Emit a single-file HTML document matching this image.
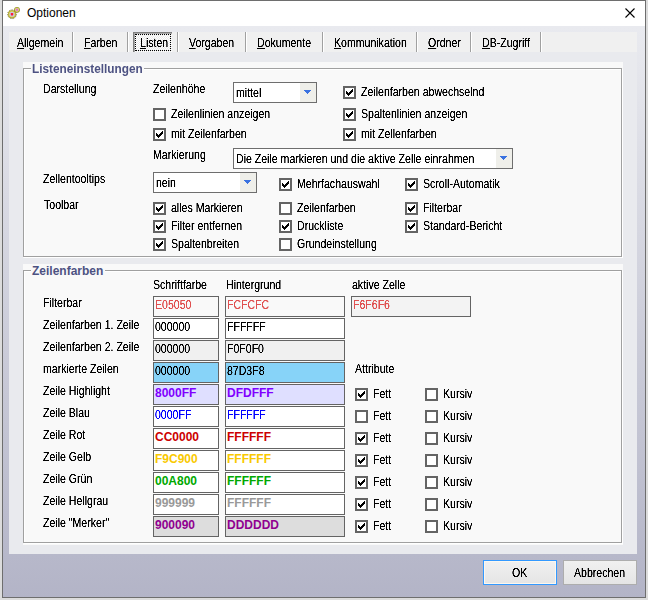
<!DOCTYPE html>
<html><head><meta charset="utf-8"><style>
html,body{margin:0;padding:0;}
body{width:648px;height:600px;position:relative;overflow:hidden;-webkit-font-smoothing:antialiased;background:#dcdcdc;font-family:"Liberation Sans", sans-serif;font-size:11px;color:#000;}
.a{position:absolute;}
.t,.ct,.tb span{filter:url(#al);}
.gt,.tb.bb span{filter:none;}
.t{position:absolute;white-space:nowrap;line-height:14px;font-size:12px;transform:scaleX(0.88);transform-origin:0 0;}
.b{font-weight:bold;transform:none;}
.cb{position:absolute;width:9px;height:9px;border:2px solid #646464;background:#fff;}
.combo{position:absolute;border:1px solid #6e6e6e;background:#fff;}
.ct{position:absolute;left:2px;line-height:14px;font-size:12px;white-space:nowrap;transform:scaleX(0.88);transform-origin:0 0;}
.cbtn{position:absolute;right:0;top:0;width:16px;bottom:0;background:#efefea;}
.tb{position:absolute;box-sizing:border-box;border:1px solid #646464;}
.tb span{position:absolute;left:1px;top:1px;line-height:14px;font-size:12px;white-space:nowrap;transform:scaleX(0.88);transform-origin:0 0;}
.tb.bb span{font-weight:bold;transform:none;}
u{text-decoration:underline;text-decoration-thickness:1px;text-underline-offset:1px;}
.gt{position:absolute;white-space:nowrap;line-height:14px;font-size:12px;font-weight:bold;color:#4d5282;}
</style></head><body><svg width="0" height="0" style="position:absolute"><filter id="al" x="-20%" y="-50%" width="140%" height="200%" color-interpolation-filters="sRGB"><feComponentTransfer><feFuncA type="linear" slope="2.2" intercept="-0.35"/></feComponentTransfer></filter></svg>
<div class="a" style="left:2px;top:0px;width:644px;height:598px;box-sizing:border-box;border:1px solid #6e6e6e;background:linear-gradient(#e9eaef 0px,#e9eaef 26px,#b3b4c7 597px);"></div>
<div class="a" style="left:3px;top:1px;width:642px;height:25px;background:#fff"></div>
<svg class="a" style="left:5px;top:4px" width="16" height="16" viewBox="0 0 16 16">
<circle cx="7.6" cy="10.8" r="4.6" fill="#e8e8e8" opacity="0.6"/>
<circle cx="7" cy="10.2" r="4.3" fill="none" stroke="#6e6620" stroke-width="1" stroke-dasharray="1.2 1.2"/>
<circle cx="7" cy="10.2" r="4.0" fill="#a69c2c"/>
<circle cx="7" cy="10.2" r="3.3" fill="#dcd44a"/>
<circle cx="7" cy="10.2" r="2.5" fill="#c6c6e6"/>
<rect x="5.8" y="9" width="2.4" height="2.4" rx="0.6" fill="#ff1a35"/>
<circle cx="12" cy="5.8" r="2.9" fill="#8c8426"/>
<circle cx="12" cy="5.8" r="2.3" fill="#dcd44a"/>
<circle cx="12" cy="5.8" r="1.6" fill="#d2b4dc"/>
<rect x="11" y="4.8" width="2" height="2" rx="0.5" fill="#e070c0"/>
</svg>
<div class="a" style="left:27px;top:5px;font-size:12px;line-height:16px;white-space:nowrap;color:#000">Optionen</div>
<svg class="a" style="left:624px;top:7px" width="12" height="12" viewBox="0 0 12 12"><path d="M1.5 1.5L10.5 10.5M10.5 1.5L1.5 10.5" stroke="#000" stroke-width="1.1"/></svg>
<div class="a" style="left:9px;top:52px;width:628px;height:502px;background:#e9eaee"></div>
<div class="a" style="left:9px;top:32px;width:628px;height:20px;background:#f0f0f0"></div>
<div class="a" style="left:72px;top:32px;width:1px;height:20px;background:#a0a0a0"></div>
<div class="a" style="left:73px;top:32px;width:1px;height:20px;background:#fff"></div>
<div class="a" style="left:127px;top:32px;width:1px;height:20px;background:#a0a0a0"></div>
<div class="a" style="left:128px;top:32px;width:1px;height:20px;background:#fff"></div>
<div class="a" style="left:177px;top:32px;width:1px;height:20px;background:#a0a0a0"></div>
<div class="a" style="left:178px;top:32px;width:1px;height:20px;background:#fff"></div>
<div class="a" style="left:245px;top:32px;width:1px;height:20px;background:#a0a0a0"></div>
<div class="a" style="left:246px;top:32px;width:1px;height:20px;background:#fff"></div>
<div class="a" style="left:322px;top:32px;width:1px;height:20px;background:#a0a0a0"></div>
<div class="a" style="left:323px;top:32px;width:1px;height:20px;background:#fff"></div>
<div class="a" style="left:416px;top:32px;width:1px;height:20px;background:#a0a0a0"></div>
<div class="a" style="left:417px;top:32px;width:1px;height:20px;background:#fff"></div>
<div class="a" style="left:470px;top:32px;width:1px;height:20px;background:#a0a0a0"></div>
<div class="a" style="left:471px;top:32px;width:1px;height:20px;background:#fff"></div>
<div class="a" style="left:540px;top:32px;width:1px;height:20px;background:#a0a0a0"></div>
<div class="a" style="left:541px;top:32px;width:1px;height:20px;background:#fff"></div>
<div class="a" style="left:133px;top:32px;width:39px;height:20px;box-sizing:border-box;border-top:1px solid #808080;border-left:1px solid #808080;box-shadow:inset 1px 1px 0 #a8a8a8;background-color:#fff;background-image:repeating-conic-gradient(#fff 0 25%,#ebebeb 0 50%);background-size:2px 2px"></div>
<div class="a" style="left:135px;top:34px;width:36px;height:17px;box-sizing:border-box;border:1px dotted #000"></div>
<div class="t" style="left:17px;top:36px;"><u>A</u>llgemein</div>
<div class="t" style="left:84px;top:36px;"><u>F</u>arben</div>
<div class="t" style="left:140px;top:36px;"><u>L</u>isten</div>
<div class="t" style="left:189px;top:36px;"><u>V</u>orgaben</div>
<div class="t" style="left:257px;top:36px;"><u>D</u>okumente</div>
<div class="t" style="left:334px;top:36px;"><u>K</u>ommunikation</div>
<div class="t" style="left:428px;top:36px;"><u>O</u>rdner</div>
<div class="t" style="left:482px;top:36px;"><u>D</u>B-Zugriff</div>
<div class="a" style="left:23px;top:62px;width:600px;height:196px;background:#f9f9f9"></div>
<div class="a" style="left:24px;top:69px;width:599px;height:189px;border:1px solid #fff;box-sizing:border-box"></div>
<div class="a" style="left:23px;top:68px;width:599px;height:189px;border:1px solid #a0a0a0;box-sizing:border-box"></div>
<div class="a" style="left:31px;top:62px;width:113px;height:15px;background:#f9f9f9"></div>
<div class="gt" style="left:32px;top:62px;transform:scaleX(0.982);transform-origin:0 0;">Listeneinstellungen</div>
<div class="t" style="left:43px;top:82px;">Darstellung</div>
<div class="t" style="left:153px;top:82px;">Zeilenhöhe</div>
<div class="combo" style="left:233px;top:82px;width:82px;height:19px"><div class="ct" style="top:3px">mittel</div><div class="cbtn"><svg width="7" height="4" viewBox="0 0 7 4" shape-rendering="crispEdges" style="position:absolute;left:4px;top:7px"><path d="M0 0h7v1h-1v1h-1v1h-1v1h-1v-1h-1v-1h-1v-1h-1z" fill="#3a72e0"/></svg></div></div>
<div class="cb" style="left:153px;top:108px"></div>
<div class="t" style="left:171px;top:107px;">Zeilenlinien anzeigen</div>
<div class="cb" style="left:153px;top:128px"><svg width="7" height="7" viewBox="0 0 7 7" shape-rendering="crispEdges" style="position:absolute;left:1px;top:1px"><path d="M6 0h1v1h-1zM5 1h2v1h-2zM0 2h1v1h-1zM4 2h3v1h-3zM0 3h2v1h-2zM3 3h3v1h-3zM0 4h5v1h-5zM1 5h3v1h-3zM2 6h1v1h-1z" fill="#000"/></svg></div>
<div class="t" style="left:171px;top:127px;">mit Zeilenfarben</div>
<div class="cb" style="left:343px;top:86px"><svg width="7" height="7" viewBox="0 0 7 7" shape-rendering="crispEdges" style="position:absolute;left:1px;top:1px"><path d="M6 0h1v1h-1zM5 1h2v1h-2zM0 2h1v1h-1zM4 2h3v1h-3zM0 3h2v1h-2zM3 3h3v1h-3zM0 4h5v1h-5zM1 5h3v1h-3zM2 6h1v1h-1z" fill="#000"/></svg></div>
<div class="t" style="left:361px;top:85px;">Zeilenfarben abwechselnd</div>
<div class="cb" style="left:343px;top:108px"><svg width="7" height="7" viewBox="0 0 7 7" shape-rendering="crispEdges" style="position:absolute;left:1px;top:1px"><path d="M6 0h1v1h-1zM5 1h2v1h-2zM0 2h1v1h-1zM4 2h3v1h-3zM0 3h2v1h-2zM3 3h3v1h-3zM0 4h5v1h-5zM1 5h3v1h-3zM2 6h1v1h-1z" fill="#000"/></svg></div>
<div class="t" style="left:361px;top:107px;">Spaltenlinien anzeigen</div>
<div class="cb" style="left:343px;top:128px"><svg width="7" height="7" viewBox="0 0 7 7" shape-rendering="crispEdges" style="position:absolute;left:1px;top:1px"><path d="M6 0h1v1h-1zM5 1h2v1h-2zM0 2h1v1h-1zM4 2h3v1h-3zM0 3h2v1h-2zM3 3h3v1h-3zM0 4h5v1h-5zM1 5h3v1h-3zM2 6h1v1h-1z" fill="#000"/></svg></div>
<div class="t" style="left:361px;top:127px;">mit Zellenfarben</div>
<div class="t" style="left:153px;top:148px;">Markierung</div>
<div class="combo" style="left:233px;top:148px;width:278px;height:19px"><div class="ct" style="top:3px">Die Zeile markieren und die aktive Zelle einrahmen</div><div class="cbtn"><svg width="7" height="4" viewBox="0 0 7 4" shape-rendering="crispEdges" style="position:absolute;left:4px;top:7px"><path d="M0 0h7v1h-1v1h-1v1h-1v1h-1v-1h-1v-1h-1v-1h-1z" fill="#3a72e0"/></svg></div></div>
<div class="t" style="left:43px;top:172px;">Zellentooltips</div>
<div class="combo" style="left:153px;top:172px;width:102px;height:19px"><div class="ct" style="top:3px">nein</div><div class="cbtn"><svg width="7" height="4" viewBox="0 0 7 4" shape-rendering="crispEdges" style="position:absolute;left:4px;top:7px"><path d="M0 0h7v1h-1v1h-1v1h-1v1h-1v-1h-1v-1h-1v-1h-1z" fill="#3a72e0"/></svg></div></div>
<div class="cb" style="left:279px;top:178px"><svg width="7" height="7" viewBox="0 0 7 7" shape-rendering="crispEdges" style="position:absolute;left:1px;top:1px"><path d="M6 0h1v1h-1zM5 1h2v1h-2zM0 2h1v1h-1zM4 2h3v1h-3zM0 3h2v1h-2zM3 3h3v1h-3zM0 4h5v1h-5zM1 5h3v1h-3zM2 6h1v1h-1z" fill="#000"/></svg></div>
<div class="t" style="left:297px;top:177px;">Mehrfachauswahl</div>
<div class="cb" style="left:405px;top:178px"><svg width="7" height="7" viewBox="0 0 7 7" shape-rendering="crispEdges" style="position:absolute;left:1px;top:1px"><path d="M6 0h1v1h-1zM5 1h2v1h-2zM0 2h1v1h-1zM4 2h3v1h-3zM0 3h2v1h-2zM3 3h3v1h-3zM0 4h5v1h-5zM1 5h3v1h-3zM2 6h1v1h-1z" fill="#000"/></svg></div>
<div class="t" style="left:423px;top:177px;">Scroll-Automatik</div>
<div class="t" style="left:44px;top:198px;">Toolbar</div>
<div class="cb" style="left:153px;top:202px"><svg width="7" height="7" viewBox="0 0 7 7" shape-rendering="crispEdges" style="position:absolute;left:1px;top:1px"><path d="M6 0h1v1h-1zM5 1h2v1h-2zM0 2h1v1h-1zM4 2h3v1h-3zM0 3h2v1h-2zM3 3h3v1h-3zM0 4h5v1h-5zM1 5h3v1h-3zM2 6h1v1h-1z" fill="#000"/></svg></div>
<div class="t" style="left:171px;top:201px;">alles Markieren</div>
<div class="cb" style="left:153px;top:220px"><svg width="7" height="7" viewBox="0 0 7 7" shape-rendering="crispEdges" style="position:absolute;left:1px;top:1px"><path d="M6 0h1v1h-1zM5 1h2v1h-2zM0 2h1v1h-1zM4 2h3v1h-3zM0 3h2v1h-2zM3 3h3v1h-3zM0 4h5v1h-5zM1 5h3v1h-3zM2 6h1v1h-1z" fill="#000"/></svg></div>
<div class="t" style="left:171px;top:219px;">Filter entfernen</div>
<div class="cb" style="left:153px;top:238px"><svg width="7" height="7" viewBox="0 0 7 7" shape-rendering="crispEdges" style="position:absolute;left:1px;top:1px"><path d="M6 0h1v1h-1zM5 1h2v1h-2zM0 2h1v1h-1zM4 2h3v1h-3zM0 3h2v1h-2zM3 3h3v1h-3zM0 4h5v1h-5zM1 5h3v1h-3zM2 6h1v1h-1z" fill="#000"/></svg></div>
<div class="t" style="left:171px;top:237px;">Spaltenbreiten</div>
<div class="cb" style="left:279px;top:202px"></div>
<div class="t" style="left:297px;top:201px;">Zeilenfarben</div>
<div class="cb" style="left:279px;top:220px"><svg width="7" height="7" viewBox="0 0 7 7" shape-rendering="crispEdges" style="position:absolute;left:1px;top:1px"><path d="M6 0h1v1h-1zM5 1h2v1h-2zM0 2h1v1h-1zM4 2h3v1h-3zM0 3h2v1h-2zM3 3h3v1h-3zM0 4h5v1h-5zM1 5h3v1h-3zM2 6h1v1h-1z" fill="#000"/></svg></div>
<div class="t" style="left:297px;top:219px;">Druckliste</div>
<div class="cb" style="left:279px;top:238px"></div>
<div class="t" style="left:297px;top:237px;">Grundeinstellung</div>
<div class="cb" style="left:405px;top:202px"><svg width="7" height="7" viewBox="0 0 7 7" shape-rendering="crispEdges" style="position:absolute;left:1px;top:1px"><path d="M6 0h1v1h-1zM5 1h2v1h-2zM0 2h1v1h-1zM4 2h3v1h-3zM0 3h2v1h-2zM3 3h3v1h-3zM0 4h5v1h-5zM1 5h3v1h-3zM2 6h1v1h-1z" fill="#000"/></svg></div>
<div class="t" style="left:423px;top:201px;">Filterbar</div>
<div class="cb" style="left:405px;top:220px"><svg width="7" height="7" viewBox="0 0 7 7" shape-rendering="crispEdges" style="position:absolute;left:1px;top:1px"><path d="M6 0h1v1h-1zM5 1h2v1h-2zM0 2h1v1h-1zM4 2h3v1h-3zM0 3h2v1h-2zM3 3h3v1h-3zM0 4h5v1h-5zM1 5h3v1h-3zM2 6h1v1h-1z" fill="#000"/></svg></div>
<div class="t" style="left:423px;top:219px;">Standard-Bericht</div>
<div class="a" style="left:23px;top:264px;width:600px;height:281px;background:#f9f9f9"></div>
<div class="a" style="left:24px;top:271px;width:599px;height:273px;border:1px solid #fff;box-sizing:border-box"></div>
<div class="a" style="left:23px;top:270px;width:599px;height:273px;border:1px solid #a0a0a0;box-sizing:border-box"></div>
<div class="a" style="left:31px;top:264px;width:74px;height:15px;background:#f9f9f9"></div>
<div class="gt" style="left:32px;top:264px;">Zeilenfarben</div>
<div class="t" style="left:153px;top:278px;">Schriftfarbe</div>
<div class="t" style="left:226px;top:278px;">Hintergrund</div>
<div class="t" style="left:352px;top:278px;">aktive Zelle</div>
<div class="t" style="left:43px;top:296px;">Filterbar</div>
<div class="tb" style="left:153px;top:296px;width:66px;height:21px;background:#f9f9f9;color:#e05050;"><span>E05050</span></div>
<div class="tb" style="left:225px;top:296px;width:120px;height:21px;background:#f9f9f9;color:#e05050;"><span>FCFCFC</span></div>
<div class="t" style="left:43px;top:318px;">Zeilenfarben 1. Zeile</div>
<div class="tb" style="left:153px;top:318px;width:66px;height:21px;background:#ffffff;color:#000;"><span>000000</span></div>
<div class="tb" style="left:225px;top:318px;width:120px;height:21px;background:#ffffff;color:#000;"><span>FFFFFF</span></div>
<div class="t" style="left:43px;top:340px;">Zeilenfarben 2. Zeile</div>
<div class="tb" style="left:153px;top:340px;width:66px;height:21px;background:#f0f0f0;color:#000;"><span>000000</span></div>
<div class="tb" style="left:225px;top:340px;width:120px;height:21px;background:#f0f0f0;color:#000;"><span>F0F0F0</span></div>
<div class="t" style="left:43px;top:362px;">markierte Zeilen</div>
<div class="tb" style="left:153px;top:362px;width:66px;height:21px;background:#87d3f8;color:#000;"><span>000000</span></div>
<div class="tb" style="left:225px;top:362px;width:120px;height:21px;background:#87d3f8;color:#000;"><span>87D3F8</span></div>
<div class="t" style="left:43px;top:384px;">Zeile Highlight</div>
<div class="tb bb" style="left:153px;top:384px;width:66px;height:21px;background:#dfdfff;color:#8000ff;"><span>8000FF</span></div>
<div class="tb bb" style="left:225px;top:384px;width:120px;height:21px;background:#dfdfff;color:#8000ff;"><span>DFDFFF</span></div>
<div class="cb" style="left:355px;top:388px"><svg width="7" height="7" viewBox="0 0 7 7" shape-rendering="crispEdges" style="position:absolute;left:1px;top:1px"><path d="M6 0h1v1h-1zM5 1h2v1h-2zM0 2h1v1h-1zM4 2h3v1h-3zM0 3h2v1h-2zM3 3h3v1h-3zM0 4h5v1h-5zM1 5h3v1h-3zM2 6h1v1h-1z" fill="#000"/></svg></div>
<div class="t" style="left:373px;top:387px;">Fett</div>
<div class="cb" style="left:425px;top:388px"></div>
<div class="t" style="left:443px;top:387px;">Kursiv</div>
<div class="t" style="left:43px;top:406px;">Zeile Blau</div>
<div class="tb" style="left:153px;top:406px;width:66px;height:21px;background:#ffffff;color:#0000ff;"><span>0000FF</span></div>
<div class="tb" style="left:225px;top:406px;width:120px;height:21px;background:#ffffff;color:#0000ff;"><span>FFFFFF</span></div>
<div class="cb" style="left:355px;top:410px"></div>
<div class="t" style="left:373px;top:409px;">Fett</div>
<div class="cb" style="left:425px;top:410px"></div>
<div class="t" style="left:443px;top:409px;">Kursiv</div>
<div class="t" style="left:43px;top:428px;">Zeile Rot</div>
<div class="tb bb" style="left:153px;top:428px;width:66px;height:21px;background:#ffffff;color:#cc0000;"><span>CC0000</span></div>
<div class="tb bb" style="left:225px;top:428px;width:120px;height:21px;background:#ffffff;color:#cc0000;"><span>FFFFFF</span></div>
<div class="cb" style="left:355px;top:432px"><svg width="7" height="7" viewBox="0 0 7 7" shape-rendering="crispEdges" style="position:absolute;left:1px;top:1px"><path d="M6 0h1v1h-1zM5 1h2v1h-2zM0 2h1v1h-1zM4 2h3v1h-3zM0 3h2v1h-2zM3 3h3v1h-3zM0 4h5v1h-5zM1 5h3v1h-3zM2 6h1v1h-1z" fill="#000"/></svg></div>
<div class="t" style="left:373px;top:431px;">Fett</div>
<div class="cb" style="left:425px;top:432px"></div>
<div class="t" style="left:443px;top:431px;">Kursiv</div>
<div class="t" style="left:43px;top:450px;">Zeile Gelb</div>
<div class="tb bb" style="left:153px;top:450px;width:66px;height:21px;background:#ffffff;color:#f9c900;"><span>F9C900</span></div>
<div class="tb bb" style="left:225px;top:450px;width:120px;height:21px;background:#ffffff;color:#f9c900;"><span>FFFFFF</span></div>
<div class="cb" style="left:355px;top:454px"><svg width="7" height="7" viewBox="0 0 7 7" shape-rendering="crispEdges" style="position:absolute;left:1px;top:1px"><path d="M6 0h1v1h-1zM5 1h2v1h-2zM0 2h1v1h-1zM4 2h3v1h-3zM0 3h2v1h-2zM3 3h3v1h-3zM0 4h5v1h-5zM1 5h3v1h-3zM2 6h1v1h-1z" fill="#000"/></svg></div>
<div class="t" style="left:373px;top:453px;">Fett</div>
<div class="cb" style="left:425px;top:454px"></div>
<div class="t" style="left:443px;top:453px;">Kursiv</div>
<div class="t" style="left:43px;top:472px;">Zeile Grün</div>
<div class="tb bb" style="left:153px;top:472px;width:66px;height:21px;background:#ffffff;color:#00a800;"><span>00A800</span></div>
<div class="tb bb" style="left:225px;top:472px;width:120px;height:21px;background:#ffffff;color:#00a800;"><span>FFFFFF</span></div>
<div class="cb" style="left:355px;top:476px"><svg width="7" height="7" viewBox="0 0 7 7" shape-rendering="crispEdges" style="position:absolute;left:1px;top:1px"><path d="M6 0h1v1h-1zM5 1h2v1h-2zM0 2h1v1h-1zM4 2h3v1h-3zM0 3h2v1h-2zM3 3h3v1h-3zM0 4h5v1h-5zM1 5h3v1h-3zM2 6h1v1h-1z" fill="#000"/></svg></div>
<div class="t" style="left:373px;top:475px;">Fett</div>
<div class="cb" style="left:425px;top:476px"></div>
<div class="t" style="left:443px;top:475px;">Kursiv</div>
<div class="t" style="left:43px;top:494px;">Zeile Hellgrau</div>
<div class="tb bb" style="left:153px;top:494px;width:66px;height:21px;background:#ffffff;color:#999999;"><span>999999</span></div>
<div class="tb bb" style="left:225px;top:494px;width:120px;height:21px;background:#ffffff;color:#999999;"><span>FFFFFF</span></div>
<div class="cb" style="left:355px;top:498px"><svg width="7" height="7" viewBox="0 0 7 7" shape-rendering="crispEdges" style="position:absolute;left:1px;top:1px"><path d="M6 0h1v1h-1zM5 1h2v1h-2zM0 2h1v1h-1zM4 2h3v1h-3zM0 3h2v1h-2zM3 3h3v1h-3zM0 4h5v1h-5zM1 5h3v1h-3zM2 6h1v1h-1z" fill="#000"/></svg></div>
<div class="t" style="left:373px;top:497px;">Fett</div>
<div class="cb" style="left:425px;top:498px"></div>
<div class="t" style="left:443px;top:497px;">Kursiv</div>
<div class="t" style="left:43px;top:516px;">Zeile "Merker"</div>
<div class="tb bb" style="left:153px;top:516px;width:66px;height:21px;background:#dddddd;color:#900090;"><span>900090</span></div>
<div class="tb bb" style="left:225px;top:516px;width:120px;height:21px;background:#dddddd;color:#900090;"><span>DDDDDD</span></div>
<div class="cb" style="left:355px;top:520px"><svg width="7" height="7" viewBox="0 0 7 7" shape-rendering="crispEdges" style="position:absolute;left:1px;top:1px"><path d="M6 0h1v1h-1zM5 1h2v1h-2zM0 2h1v1h-1zM4 2h3v1h-3zM0 3h2v1h-2zM3 3h3v1h-3zM0 4h5v1h-5zM1 5h3v1h-3zM2 6h1v1h-1z" fill="#000"/></svg></div>
<div class="t" style="left:373px;top:519px;">Fett</div>
<div class="cb" style="left:425px;top:520px"></div>
<div class="t" style="left:443px;top:519px;">Kursiv</div>
<div class="tb" style="left:351px;top:296px;width:120px;height:21px;background:#f3f3f3;color:#e05050;"><span>F6F6F6</span></div>
<div class="t" style="left:355px;top:362px;">Attribute</div>
<div class="a" style="left:483px;top:560px;width:74px;height:25px;box-sizing:border-box;border:1px solid #3399ff;background:linear-gradient(#f0f0f0,#e5e5e5);"><div style="position:absolute;left:0;top:0;right:0;bottom:0;border:1px solid #fcf7ee"></div></div>
<div class="a" style="left:563px;top:560px;width:74px;height:25px;box-sizing:border-box;border:1px solid #adadad;background:linear-gradient(#f0f0f0,#e5e5e5);"></div>
<div class="t" style="left:512px;top:566px;">OK</div>
<div class="t" style="left:574px;top:566px;">Abbrechen</div>
</body></html>
